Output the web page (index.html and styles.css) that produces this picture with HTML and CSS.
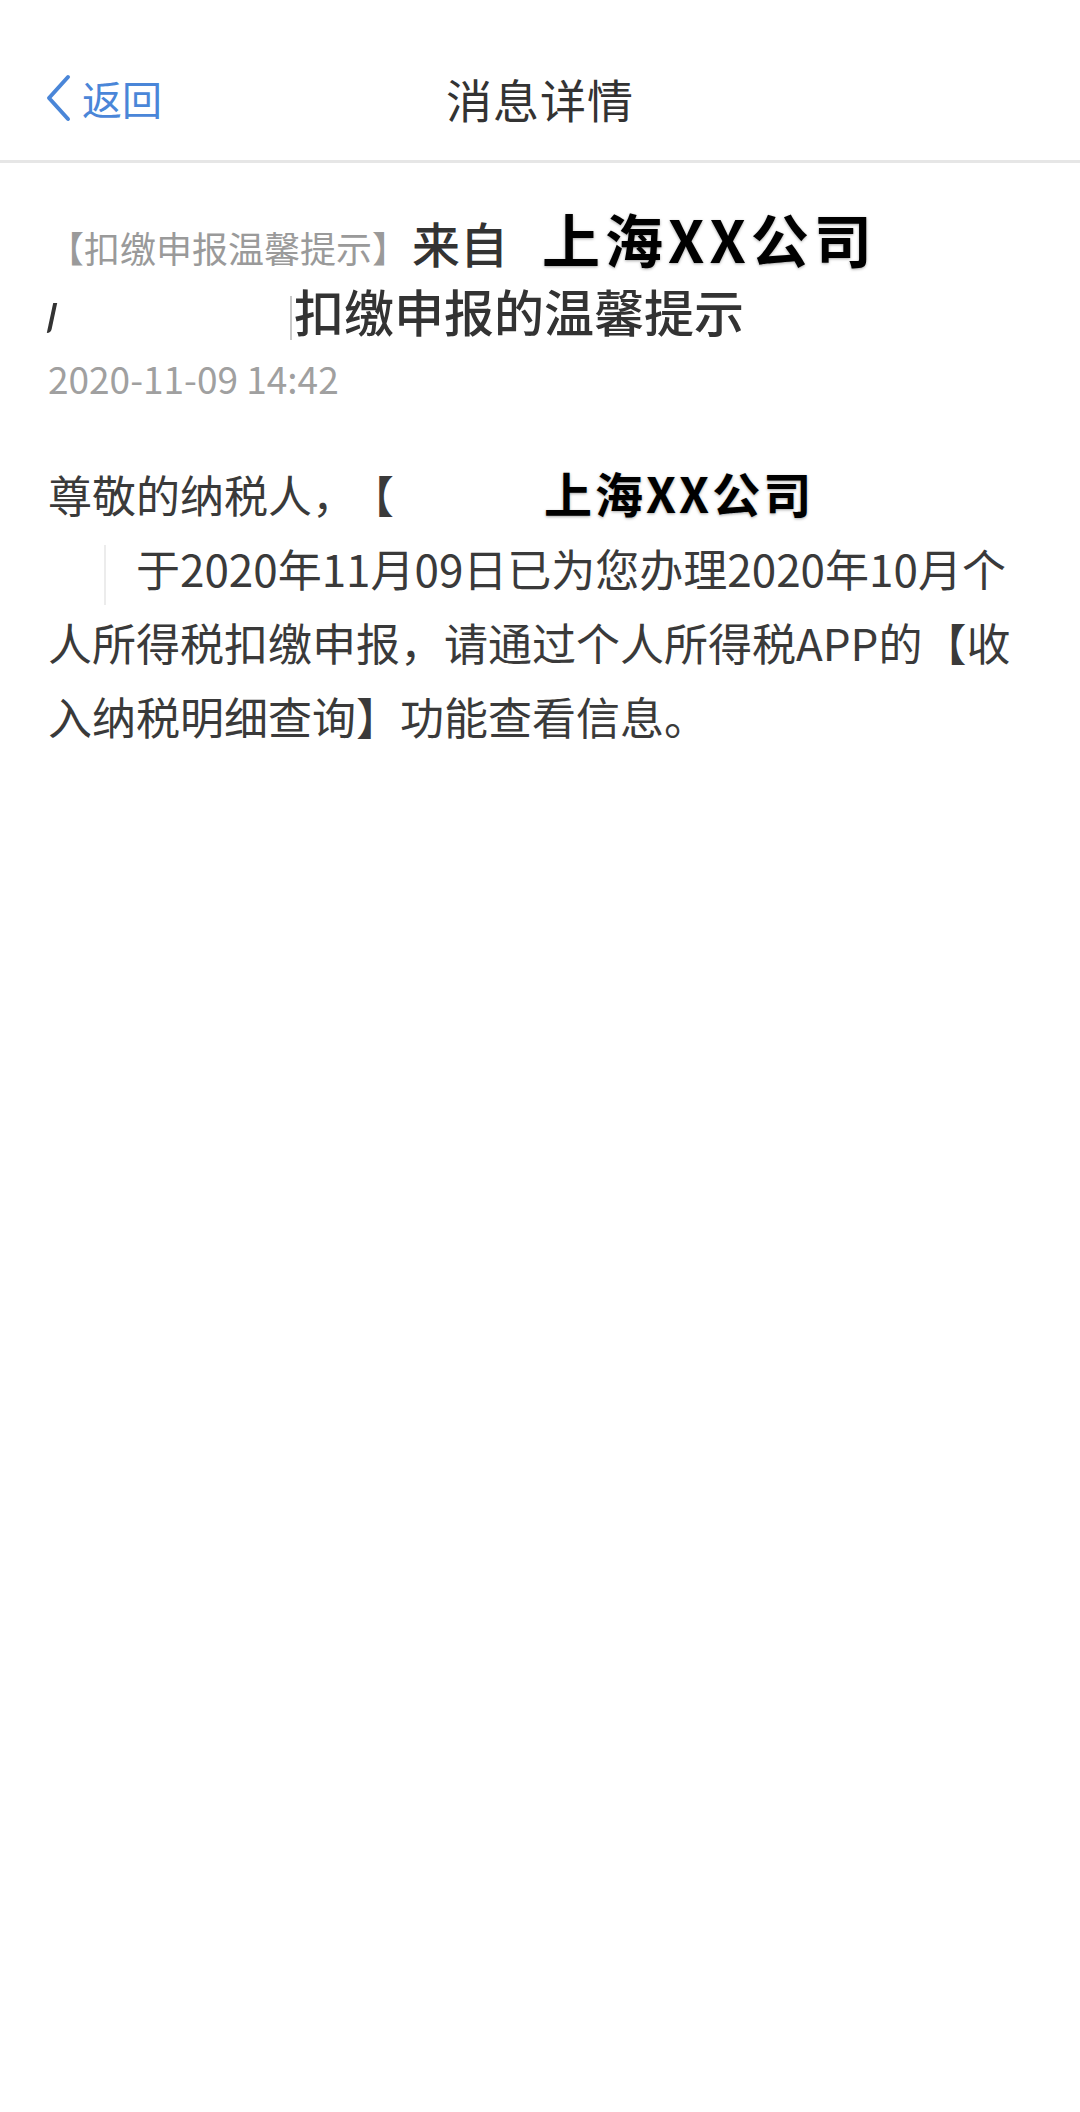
FILE: index.html
```html
<!DOCTYPE html>
<html lang="zh-CN">
<head>
    <meta charset="UTF-8">
    <meta name="viewport" content="width=device-width, initial-scale=1.0">
    <title>消息详情</title>
    <link rel="stylesheet" href="styles.css">
</head>
<body>
    <div class="nav">
        <div class="back">
            <svg class="chev" width="28" height="48" viewBox="0 0 28 48">
                <path d="M24 3 L5 24 L24 45" fill="none" stroke="#4a86d8" stroke-width="4" stroke-linecap="round" stroke-linejoin="round"/>
            </svg>
            <span>返回</span>
        </div>
        <div class="nav-title">消息详情</div>
    </div>

    <div class="content">
        <div class="msg-title">
            <div class="line">
                <span class="tag">【扣缴申报温馨提示】</span><span class="from">来自</span><span class="company big">上海XX公司</span>
            </div>
            <div class="line">
                <span class="frag"></span><span class="blank w1"></span><span class="edge"></span>扣缴申报的温馨提示
            </div>
        </div>
        <div class="date">2020-11-09 14:42</div>

        <div class="body">
            <div class="first">尊敬的纳税人，<span class="bracket">【</span><span class="blank w2"></span><span class="company">上海XX公司</span></div>
            <p class="rest"><span class="edge light"></span>于2020年11月09日已为您办理2020年10月个人所得税扣缴申报，请通过个人所得税APP的【收入纳税明细查询】功能查看信息。</p>
        </div>
    </div>
</body>
</html>
```

FILE: styles.css
```css
body {
    margin: 0;
    padding: 0;
    background-color: #fff;
    font-family: "Noto Sans CJK SC", "Noto Sans", sans-serif;
    color: #333;
}

.nav {
    position: relative;
    height: 124px;
    padding-top: 36px;
    display: flex;
    align-items: center;
    justify-content: center;
    border-bottom: 3px solid #e6e6e6;
}
.back {
    position: absolute;
    left: 44px;
    top: 36px;
    height: 124px;
    display: flex;
    align-items: center;
    gap: 10px;
    color: #4a86d8;
    font-size: 40px;
}
.chev {
    display: block;
}
.nav-title {
    font-size: 46px;
    color: #333;
    letter-spacing: 1px;
}

.content {
    padding: 0 48px;
}

.msg-title {
    padding-top: 39px;
    font-size: 50px;
    font-weight: 500;
    color: #333;
}
.msg-title .line {
    height: 72px;
    line-height: 72px;
    white-space: nowrap;
}
.tag {
    font-size: 36px;
    font-weight: 400;
    color: #9a9a9a;
}
.from {
    margin-left: 4px;
    font-size: 48px;
}
.company {
    color: #000;
    font-weight: 700;
    text-shadow: 0 1px 3px rgba(0, 0, 0, 0.35);
}
.company.big {
    font-size: 58px;
    letter-spacing: 5px;
    margin-left: 34px;
}
/* leftover stroke of the hidden name */
.frag {
    display: inline-block;
    width: 4px;
    height: 30px;
    margin-left: 2px;
    background-color: #333;
    border-radius: 0 0 4px 0;
    transform: skewX(-12deg);
    vertical-align: middle;
}
.blank {
    display: inline-block;
    height: 1px;
}
.w1 {
    width: 236px;
}
.w2 {
    width: 150px;
}
.edge {
    display: inline-block;
    width: 2px;
    height: 44px;
    margin-right: 2px;
    background-color: #c8c8c8;
    vertical-align: middle;
}

.date {
    margin-top: 2px;
    font-size: 37px;
    line-height: 60px;
    color: #a0a0a0;
}

.body {
    margin-top: 47px;
    font-size: 44px;
    line-height: 74px;
    color: #3a3a3a;
}
.body .first {
    white-space: nowrap;
}
.bracket {
    margin-left: 16px;
}
.body .company {
    font-size: 48px;
    letter-spacing: 3px;
}
.rest {
    margin: 0;
    text-indent: 56px;
}
.edge.light {
    height: 60px;
    margin-right: 30px;
    background-color: #ececec;
}
```
